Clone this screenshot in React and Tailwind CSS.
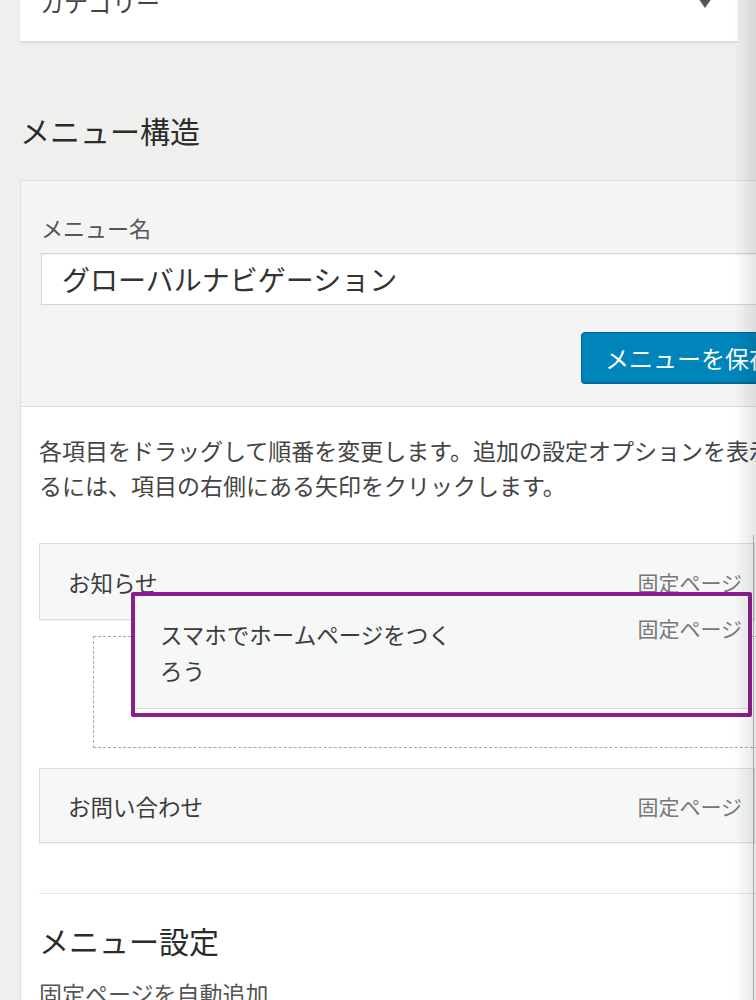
const TYPE = "固定ページ";

const MenuItem = ({ title, className = "" }) => (
  <div
    className={`w-[716px] flex items-center justify-between pl-[28px] pr-[12px] bg-[#f6f7f7] border border-[#dcdcdc] shadow-[0_1px_1px_rgba(0,0,0,0.04)] ${className}`}
  >
    <span className="text-[22.5px] leading-[34px] text-[#3c3c3c]">{title}</span>
    <span className="text-[21px] leading-[30px] text-[#777]">{TYPE}</span>
  </div>
);

export default function App() {
  return (
    <div className="relative w-[756px] h-[1000px] overflow-hidden bg-[#efefed] font-['Noto_Sans_CJK_JP','Noto_Sans',sans-serif] text-[#444]">
      {/* category select card */}
      <div className="ml-5 w-[718px] h-[80px] -mt-[38px] bg-white border-b border-[#d8d8d8] shadow-[0_1px_2px_rgba(0,0,0,0.08)] flex items-center justify-between pl-5 pr-[26px]">
        <span className="text-[24px] leading-[32px] text-[#444]">カテゴリー</span>
        <span className="w-0 h-0 border-l-[7px] border-r-[7px] border-t-[10px] border-l-transparent border-r-transparent border-t-[#555] mt-[2px]" />
      </div>

      <h2 className="ml-5 mt-[68px] text-[30px] leading-[40px] text-[#2b2b2b]">メニュー構造</h2>

      {/* menu panel */}
      <div className="ml-5 mt-[30px] w-[800px] bg-white border-l border-t border-[#dedede]">
        <div className="bg-[#f3f4f3] border-b border-[#dddddd] pl-5 pt-[31px] pb-[23px]">
          <label className="block text-[22px] leading-[30px] text-[#555]">メニュー名</label>
          <div className="mt-[11px] h-[52px] bg-white border border-[#d4d4d4] shadow-[inset_0_1px_2px_rgba(0,0,0,0.05)] flex items-center pl-5">
            <span className="text-[28px] leading-[36px] text-[#333]">グローバルナビゲーション</span>
          </div>
          <button className="mt-[27px] ml-[540px] h-[51px] w-[240px] bg-[#0085ba] border border-[#006799] rounded-[4px] text-left pl-[23px] text-white text-[24px] leading-[32px] whitespace-nowrap shadow-[0_1px_0_#006799]">
            メニューを保存
          </button>
        </div>

        <div className="pl-[18px] pt-[26px]">
          <p className="text-[23px] leading-[35px] text-[#444]">
            <span className="block whitespace-nowrap">各項目をドラッグして順番を変更します。追加の設定オプションを表示す</span>
            <span className="block whitespace-nowrap">るには、項目の右側にある矢印をクリックします。</span>
          </p>

          <MenuItem title="お知らせ" className="mt-[40px] h-[77px]" />
          <div className="mt-[16px] ml-[54px] h-[112px] w-[700px] border border-dashed border-[#a8a8a8]" />
          <MenuItem title="お問い合わせ" className="mt-[20px] h-[75px]" />

          <div className="mt-[50px] border-t border-[#e6e6e6]" />
          <h3 className="mt-[26px] text-[30px] leading-[40px] text-[#2b2b2b]">メニュー設定</h3>
          <p className="mt-[16px] text-[23px] leading-[34px] text-[#555]">固定ページを自動追加</p>
        </div>
      </div>

      {/* item being dragged */}
      <div className="absolute left-[131px] top-[592px] w-[621px] h-[125px] border-[4px] border-[#8c1d8e] rounded-[2px]">
        <div className="h-[113px] bg-[#f6f7f7] border-b border-[#d8d8d8] flex justify-between pl-[25px] pr-[6px] pt-[20px]">
          <span className="text-[22.5px] leading-[36px] text-[#3c3c3c]">
            スマホでホームページをつく
            <br />
            ろう
          </span>
          <span className="text-[21px] leading-[30px] text-[#777] -mt-[3px]">{TYPE}</span>
        </div>
      </div>

      {/* right edge shading */}
      <div className="absolute right-0 top-0 h-full w-[22px] bg-gradient-to-r from-transparent to-black/10" />
      <div className="absolute left-[753px] top-[535px] bottom-0 w-px bg-[#8a8a8a]/70" />
    </div>
  );
}
